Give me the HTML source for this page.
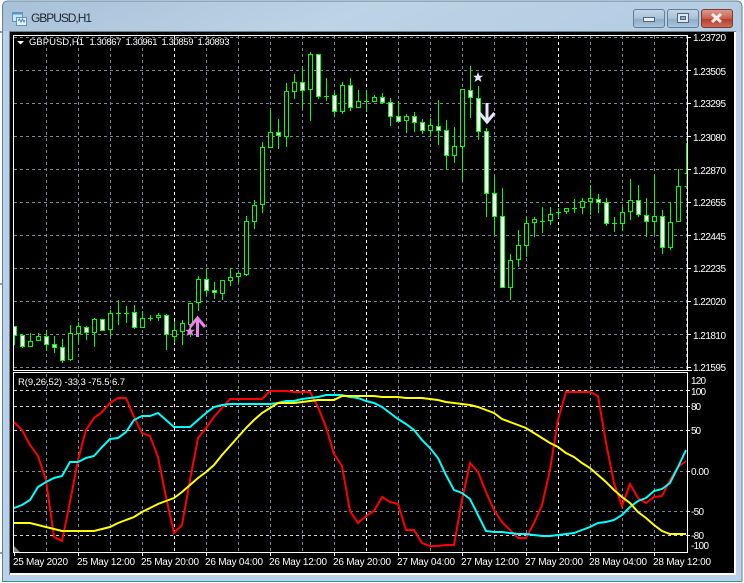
<!DOCTYPE html>
<html><head><meta charset="utf-8"><title>GBPUSD,H1</title>
<style>
html,body{margin:0;padding:0;background:#fff;width:744px;height:583px;overflow:hidden}
svg{position:absolute;left:0;top:0;display:block}
text{font-family:"Liberation Sans",sans-serif;font-size:10px;fill:#fff}
.s{font-size:9.5px}
</style></head><body>
<svg width="744" height="583" viewBox="0 0 744 583" xmlns="http://www.w3.org/2000/svg">
<defs>
<linearGradient id="tb" x1="0" y1="0" x2="1" y2="0.1"><stop offset="0" stop-color="#a8c1d8"/><stop offset=".5" stop-color="#bdd3e6"/><stop offset="1" stop-color="#b4cde3"/></linearGradient>
<linearGradient id="bn" x1="0" y1="0" x2="0" y2="1"><stop offset="0" stop-color="#c5d6e6"/><stop offset=".5" stop-color="#a9c1d8"/><stop offset=".55" stop-color="#8fadc9"/><stop offset="1" stop-color="#adc6dc"/></linearGradient>
<linearGradient id="cl" x1="0" y1="0" x2="0" y2="1"><stop offset="0" stop-color="#dc9c90"/><stop offset=".5" stop-color="#c9604f"/><stop offset=".55" stop-color="#b93c2c"/><stop offset="1" stop-color="#c8705f"/></linearGradient>
</defs>
<!-- window -->
<path d="M2.5 581.5V7q0-6 6-6H736q6 0 6 6V581.5z" fill="#b9d1ea" stroke="#5f8296"/>
<path d="M3 31V7q0-5 5-5H736q5 0 5 5V32z" fill="url(#tb)"/>
<path d="M0 32h2M0 553h2M0 284h2" stroke="#333"/>
<path d="M2 581.5H742" stroke="#3d8c9f"/>
<rect x="9" y="31" width="727" height="544" fill="#fff"/>
<path d="M9.5 575V31.5H736" stroke="#6f7f8c" fill="none"/>
<rect x="10" y="32" width="724" height="541" fill="#000"/>
<!-- title icon -->
<g>
<rect x="12.5" y="12.5" width="10" height="9" fill="#cfe3f5" stroke="#5b93cc"/>
<rect x="12.5" y="12.5" width="10" height="2" fill="#5b93cc"/>
<rect x="16.5" y="17.5" width="10" height="8" fill="#eaf3fb" stroke="#5b93cc"/>
<path d="M18 21l1.5-2 1.5 3 1.5-3 1.5 3 1-2" stroke="#4a7fb8" fill="none"/>
</g>
<text x="31" y="22" textLength="61" style="font-size:12px;fill:#1c2530">GBPUSD,H1</text>
<!-- buttons -->
<rect x="633.5" y="9.5" width="31" height="18" rx="2.5" fill="url(#bn)" stroke="#5f7f98"/>
<rect x="643.5" y="17.5" width="11" height="4" fill="#e8eef4" stroke="#4f6578"/>
<rect x="667.5" y="9.5" width="31" height="18" rx="2.5" fill="url(#bn)" stroke="#5f7f98"/>
<rect x="677.5" y="13.5" width="11" height="9" fill="#dfe8f0" stroke="#4f6578"/>
<rect x="680.5" y="16.5" width="5" height="3" fill="#8fadc9" stroke="#4f6578"/>
<rect x="701.5" y="9.5" width="31" height="18" rx="2.5" fill="url(#cl)" stroke="#7c3a34"/>
<path d="M712 14l9 8M721 14l-9 8" stroke="#f4f0ee" stroke-width="3"/>
<!-- main grid -->
<g stroke="#778899" stroke-dasharray="3 3" fill="none" shape-rendering="crispEdges">
<path d="M14 37.5H687M14 70.5H687M14 103.5H687M14 136.5H687M14 169.5H687M14 202.5H687M14 235.5H687M14 268.5H687M14 301.5H687M14 334.5H687M14 367.5H687"/>
<path d="M46.5 36V370M78.5 36V370M110.5 36V370M142.5 36V370M206.5 36V370M238.5 36V370M270.5 36V370M302.5 36V370M334.5 36V370M398.5 36V370M430.5 36V370M462.5 36V370M494.5 36V370M526.5 36V370M590.5 36V370M622.5 36V370M654.5 36V370M686.5 36V370"/>
<path d="M46.5 374V552M78.5 374V552M110.5 374V552M142.5 374V552M206.5 374V552M238.5 374V552M270.5 374V552M302.5 374V552M334.5 374V552M398.5 374V552M430.5 374V552M462.5 374V552M494.5 374V552M526.5 374V552M590.5 374V552M622.5 374V552M654.5 374V552"/>
<path d="M14 471.5H687M14 511.5H687"/>
</g>
<g stroke="#fff" stroke-dasharray="3 3" fill="none" shape-rendering="crispEdges">
<path d="M174.5 36V370M366.5 36V370M558.5 36V370M174.5 374V552M366.5 374V552M558.5 374V552"/>
</g>
<g stroke="#cfd4da" stroke-dasharray="3 3" fill="none" shape-rendering="crispEdges">
<path d="M14 390.5H687M14 406.5H687M14 430.5H687M14 535.5H687"/>
</g>
<!-- wicks and dojis -->
<path fill="none" stroke="#00ff00" shape-rendering="crispEdges" d="M14.5 326V345M22.5 334V348M30.5 333V347M38.5 333V341M46.5 330V351M54.5 336V353M62.5 339V363M70.5 325V361M78.5 322V343M86.5 326V340M94.5 318V347M102.5 319V331M110.5 310V336M118.5 300V325M126.5 306V323M134.5 305V329M142.5 311V328M150.5 315V321M158.5 313V321M166.5 314V350M174.5 321V343M182.5 320V345M190.5 303V337M198.5 276V311M206.5 269V296M214.5 282V299M222.5 280V300M230.5 268V286M238.5 273V283M246.5 216V276M254.5 200V229M262.5 142V213M270.5 110V148M278.5 119V149M286.5 83V147M294.5 74V99M302.5 67V108M310.5 52V121M318.5 54V99M326.5 78V101M334.5 93V117M342.5 82V114M350.5 78V111M358.5 90V108M366.5 90V112M374.5 95V102M382.5 93V104M390.5 98V126M398.5 101V122M406.5 114V133M414.5 112V132M422.5 119V134M430.5 118V136M438.5 100V145M446.5 120V169M454.5 127V163M462.5 89V181M470.5 66V118M478.5 86V140M486.5 128V217M494.5 177V235M502.5 188V288M510.5 254V300M518.5 230V267M526.5 217V257M534.5 217V237M542.5 207V233M550.5 207V225M558.5 208V218M566.5 208V214M574.5 199V213M582.5 198V214M590.5 185V215M598.5 194V213M606.5 198V226M614.5 217V232M622.5 207V231M630.5 179V220M638.5 185V217M646.5 198V237M654.5 175V234M662.5 210V254M670.5 202V250M678.5 169V222M686.5 143V173
M116 313.5h5M124 313.5h5M148 318.5h5M212 291.5h5M324 96.5h5M364 101.5h5M540 221.5h5M556 212.5h5M572 208.5h5M612 223.5h5"/>
<!-- hollow bodies -->
<path fill="#000" stroke="#00ff00" shape-rendering="crispEdges" d="M28.5 341.5h4v5h-4zM36.5 336.5h4v4h-4zM68.5 333.5h4v26h-4zM76.5 326.5h4v7h-4zM92.5 319.5h4v13h-4zM108.5 313.5h4v16h-4zM140.5 318.5h4v9h-4zM156.5 315.5h4v2h-4zM172.5 330.5h4v6h-4zM180.5 323.5h4v8h-4zM188.5 303.5h4v21h-4zM196.5 279.5h4v23h-4zM220.5 280.5h4v13h-4zM228.5 277.5h4v3h-4zM236.5 273.5h4v3h-4zM244.5 221.5h4v53h-4zM252.5 205.5h4v16h-4zM260.5 147.5h4v57h-4zM268.5 132.5h4v15h-4zM284.5 91.5h4v45h-4zM292.5 82.5h4v9h-4zM308.5 54.5h4v35h-4zM340.5 85.5h4v26h-4zM356.5 101.5h4v6h-4zM372.5 97.5h4v4h-4zM404.5 116.5h4v4h-4zM428.5 125.5h4v5h-4zM452.5 146.5h4v9h-4zM460.5 89.5h4v57h-4zM508.5 260.5h4v27h-4zM516.5 245.5h4v14h-4zM524.5 223.5h4v22h-4zM532.5 219.5h4v3h-4zM548.5 214.5h4v6h-4zM564.5 208.5h4v3h-4zM580.5 201.5h4v6h-4zM588.5 198.5h4v3h-4zM620.5 212.5h4v11h-4zM628.5 200.5h4v11h-4zM652.5 216.5h4v5h-4zM668.5 222.5h4v25h-4zM676.5 186.5h4v35h-4zM684.5 173.5h2.500v13h-2.500"/>
<!-- filled bodies -->
<path fill="#fff" stroke="#00ff00" shape-rendering="crispEdges" d="M14 326.5h2.500v9h-2.500M20.5 335.5h4v11h-4zM44.5 336.5h4v8h-4zM52.5 344.5h4v3h-4zM60.5 347.5h4v13h-4zM84.5 327.5h4v5h-4zM100.5 319.5h4v11h-4zM132.5 312.5h4v15h-4zM164.5 315.5h4v19h-4zM204.5 279.5h4v11h-4zM212.5 290.5h4v2h-4zM276.5 132.5h4v3h-4zM300.5 82.5h4v8h-4zM316.5 54.5h4v42h-4zM332.5 95.5h4v16h-4zM348.5 85.5h4v22h-4zM380.5 97.5h4v5h-4zM388.5 102.5h4v14h-4zM396.5 116.5h4v5h-4zM412.5 116.5h4v6h-4zM420.5 122.5h4v8h-4zM436.5 126.5h4v4h-4zM444.5 130.5h4v25h-4zM468.5 90.5h4v7h-4zM476.5 98.5h4v33h-4zM484.5 131.5h4v62h-4zM492.5 193.5h4v23h-4zM500.5 216.5h4v71h-4zM596.5 199.5h4v3h-4zM604.5 202.5h4v21h-4zM636.5 200.5h4v14h-4zM644.5 215.5h4v6h-4zM660.5 216.5h4v31h-4z"/>
<!-- frame -->
<g fill="none" stroke="#fff" shape-rendering="crispEdges">
<path d="M13.5 370V35.5H687.5V370"/>
<path d="M13 370.5H692M13 372.5H688"/>
<path d="M13.5 372V552.5H687.5V372"/>
<path d="M14.5 553v3M78.5 553v3M142.5 553v3M206.5 553v3M270.5 553v3M334.5 553v3M398.5 553v3M462.5 553v3M526.5 553v3M590.5 553v3M654.5 553v3"/>
<path d="M688 37.5h3M688 70.5h3M688 103.5h3M688 136.5h3M688 169.5h3M688 202.5h3M688 235.5h3M688 268.5h3M688 301.5h3M688 334.5h3M688 367.5h3M688 390.5h2M688 406.5h2M688 430.5h2M688 471.5h2M688 511.5h2M688 535.5h2"/>
</g>
<path d="M14 546L20 552H14z" fill="#778899"/>
<!-- indicator lines -->
<polyline fill="none" stroke="#ff0000" stroke-width="2" points="14,422 22,430 30,445 38,456 46,480 54,537 62,541 70,502 78,460 86,430 94,418 102,412 110,403 118,398 126,398 134,417 142,433 150,436 158,457 166,497 174,533 182,525 190,480 198,438 206,428 214,417 222,408 230,399 238,399 246,399 254,399 262,399 270,391 278,391 286,391 294,392 302,392 310,392 318,407 326,427 334,454 342,466 350,511 358,523 366,516 374,511 382,497 390,502 398,504 406,530 414,530 422,543 430,546 438,546 446,545 454,545 462,500 470,463 478,472 486,492 494,510 502,522 510,530 518,538 526,538 534,523 542,505 550,470 558,420 566,392 574,392 582,392 590,392 598,396 606,443 614,483 622,506 630,484 638,498 646,503 654,497 662,496 670,480 678,467 686,461"/>
<polyline fill="none" stroke="#00ffff" stroke-width="2" points="14,508 22,505 30,500 38,487 46,482 54,478 62,476 70,462 78,462 86,458 94,456 102,447 110,439 118,438 126,432 134,420 142,416 150,416 158,413 166,420 174,427 182,427 190,427 198,420 206,413 214,407 222,405 230,404 238,404 246,404 254,404 262,404 270,404 278,403 286,401 294,401 302,399 310,398 318,397 326,395 334,395 342,395 350,397 358,398 366,401 374,403 382,407 390,413 398,419 406,424 414,430 422,440 430,448 438,458 446,475 454,490 462,493 470,499 478,515 486,531 494,532 502,532 510,533 518,534 526,534 534,535 542,536 550,536 558,535 566,534 574,533 582,530 590,527 598,523 606,522 614,520 622,515 630,507 638,501 646,498 654,491 662,489 670,483 678,467 686,450"/>
<polyline fill="none" stroke="#ffff00" stroke-width="2" points="14,523 22,523 30,523 38,525 46,527 54,529 62,531 70,531 78,531 86,531 94,531 102,529 110,527 118,523 126,520 134,517 142,512 150,508 158,504 166,501 174,498 182,492 190,485 198,478 206,472 214,465 222,455 230,446 238,437 246,428 254,420 262,413 270,408 278,403 286,403 294,403 302,402 310,401 318,400 326,400 334,400 342,396 350,396 358,396 366,396 374,396 382,397 390,397 398,397 406,398 414,398 422,398 430,399 438,400 446,402 454,403 462,404 470,405 478,407 486,410 494,413 502,419 510,422 518,425 526,428 534,433 542,438 550,443 558,447 566,453 574,457 582,463 590,468 598,475 606,482 614,490 622,497 630,503 638,512 646,518 654,525 662,531 670,534 678,534 686,534"/>
<!-- arrows -->
<g fill="none" stroke="#ee82ee" stroke-width="3">
<path d="M197.5 337V318M190 327l7.500-9 7.500 9"/>
</g>
<polygon fill="#ee82ee" points="190,326 191.300,329.700 195,329.700 192.200,332 193.500,336 190,333.800 186.500,336 187.800,332 185,329.700 188.700,329.700"/>
<g fill="none" stroke="#e6e6fa" stroke-width="3">
<path d="M487 103V122M479.500 113l7.500 9 7.500-9"/>
</g>
<polygon fill="#e6e6fa" points="478,72 479.300,75.700 483,75.700 480.200,78 481.500,82 478,79.800 474.500,82 475.800,78 473,75.700 476.700,75.700"/>
<!-- chart text -->
<path d="M17 41h7l-3.500 3.500z" fill="#fff"/>
<text class="s" x="29" y="45" textLength="55">GBPUSD,H1</text>
<text class="s" x="89.500" y="45" textLength="32">1.30867</text>
<text class="s" x="125.500" y="45" textLength="32">1.30961</text>
<text class="s" x="161.500" y="45" textLength="32">1.30859</text>
<text class="s" x="197.500" y="45" textLength="32">1.30893</text>
<text class="s" x="18" y="385" textLength="107">R(9,26,52) -33.3 -75.5 6.7</text>
<!-- price scale -->
<text x="693" y="41" textLength="33">1.23720</text>
<text x="693" y="75" textLength="33">1.23505</text>
<text x="693" y="107" textLength="33">1.23295</text>
<text x="693" y="141" textLength="33">1.23080</text>
<text x="693" y="174" textLength="33">1.22870</text>
<text x="693" y="206" textLength="33">1.22655</text>
<text x="693" y="240" textLength="33">1.22445</text>
<text x="693" y="272" textLength="33">1.22235</text>
<text x="693" y="305" textLength="33">1.22020</text>
<text x="693" y="339" textLength="33">1.21810</text>
<text x="693" y="371" textLength="33">1.21595</text>
<text x="691" y="384" textLength="15">120</text>
<text x="691" y="395" textLength="15">100</text>
<text x="691" y="410" textLength="10">80</text>
<text x="691" y="434" textLength="10">50</text>
<text x="691" y="475" textLength="18">0.00</text>
<text x="691" y="515" textLength="13">-50</text>
<text x="691" y="539" textLength="13">-80</text>
<text x="691" y="549" textLength="18">-100</text>
<!-- time scale -->
<text x="13" y="565" textLength="55">25 May 2020</text>
<text x="77" y="565" textLength="58">25 May 12:00</text>
<text x="141" y="565" textLength="58">25 May 20:00</text>
<text x="205" y="565" textLength="58">26 May 04:00</text>
<text x="269" y="565" textLength="58">26 May 12:00</text>
<text x="333" y="565" textLength="58">26 May 20:00</text>
<text x="397" y="565" textLength="58">27 May 04:00</text>
<text x="461" y="565" textLength="58">27 May 12:00</text>
<text x="525" y="565" textLength="58">27 May 20:00</text>
<text x="589" y="565" textLength="58">28 May 04:00</text>
<text x="653" y="565" textLength="58">28 May 12:00</text>
</svg>
</body></html>
